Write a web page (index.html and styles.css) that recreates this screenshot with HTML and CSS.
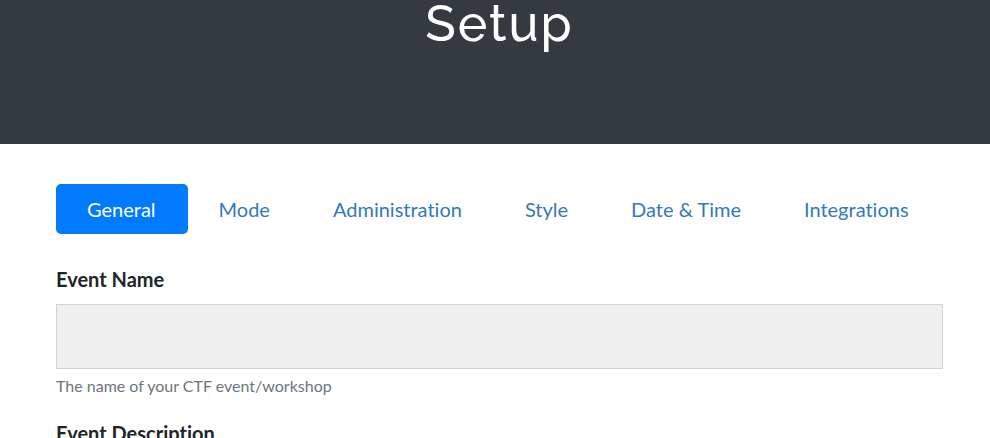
FILE: index.html
```html
<!DOCTYPE html>
<html lang="en">
<head>
<meta charset="utf-8">
<title>Setup</title>
<link rel="stylesheet" href="styles.css">
</head>
<body>
<header class="jumbotron"><h1>Setup</h1></header>
<main class="container">
<nav class="pills">
<a class="pill active" href="#general">General</a>
<a class="pill" href="#mode">Mode</a>
<a class="pill" href="#administration">Administration</a>
<a class="pill" href="#style">Style</a>
<a class="pill" href="#datetime">Date &amp; Time</a>
<a class="pill" href="#integrations">Integrations</a>
</nav>
<form id="general">
<div class="group">
<label for="name">Event Name</label>
<input id="name" type="text">
<small>The name of your CTF event/workshop</small>
</div>
<div class="group">
<label for="description">Event Description</label>
<textarea id="description" rows="5"></textarea>
</div>
</form>
</main>
</body>
</html>
```
FILE: styles.css
```css
* { box-sizing: border-box; }
html { overflow: hidden; }
body {
  margin: 0;
  background: #fff;
  color: #212529;
  font-family: Lato, "Liberation Sans", sans-serif;
  font-size: 20px;
  font-variant-ligatures: none;
  line-height: 30px;
}
.jumbotron {
  padding: 0 47px 96px 56px;
  background: #343a40;
  color: #fff;
  text-align: center;
}
h1 {
  margin: 0;
  font-family: Raleway, Lato, sans-serif;
  font-size: 50px;
  font-weight: 500;
  line-height: 48px;
  letter-spacing: 2px;
}
.container { padding: 40px 47px 0 56px; }
.pills {
  display: flex;
  margin-bottom: 30px;
}
.pill {
  padding: 10px 32px 10px 31px;
  border-radius: 5px;
  color: #337ab7;
  text-decoration: none;
}
.pill.active { background: #007bff; color: #fff; }
.group { margin-bottom: 20px; }
label {
  display: block;
  margin-bottom: 10px;
  font-weight: 700;
}
input, textarea {
  display: block;
  width: 100%;
  padding: 16px;
  border: 1px solid #ced4da;
  border-radius: 0;
  background: #efefef;
  font: inherit;
}
input { height: 65px; }
small {
  display: block;
  margin-top: 5px;
  color: #6c757d;
  font-size: 16px;
  line-height: 24px;
}
```
